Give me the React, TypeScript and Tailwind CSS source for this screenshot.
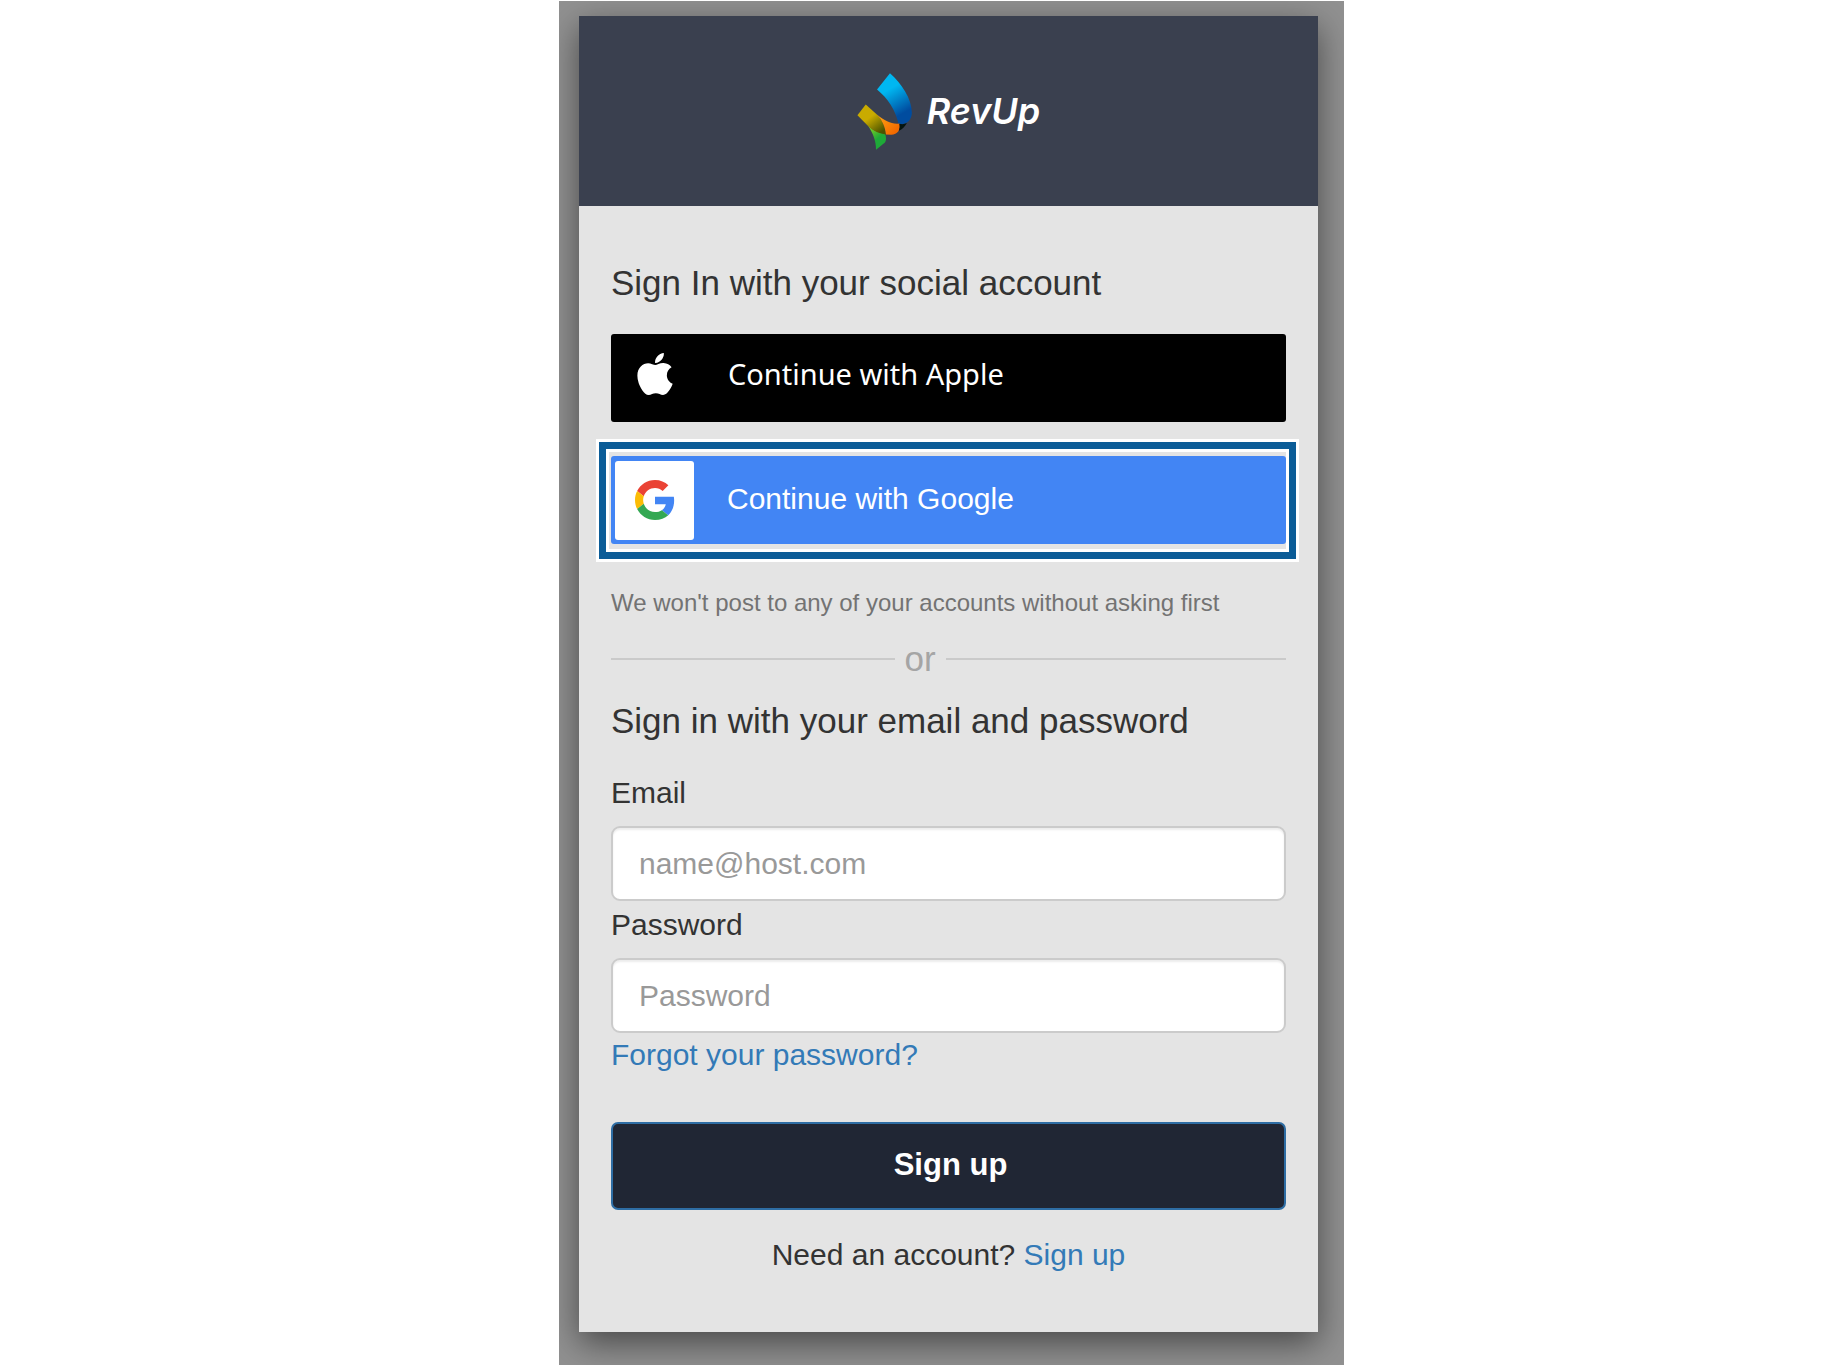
import { FormEvent, useState } from 'react';
import { FaApple } from 'react-icons/fa';

function LogoMark() {
  return (
    <svg viewBox="50 36 168 232" className="w-[56px] h-[77px]" aria-hidden="true">
      <defs>
        <linearGradient id="blue" x1="135" y1="70" x2="200" y2="180" gradientUnits="userSpaceOnUse">
          <stop offset="0.15" stopColor="#00b7f1" />
          <stop offset="0.8" stopColor="#004c9f" />
        </linearGradient>
        <linearGradient id="gold" x1="85" y1="160" x2="125" y2="212" gradientUnits="userSpaceOnUse">
          <stop offset="0.15" stopColor="#c9ab00" />
          <stop offset="1" stopColor="#4b5400" />
        </linearGradient>
        <linearGradient id="orange" x1="118" y1="170" x2="165" y2="212" gradientUnits="userSpaceOnUse">
          <stop offset="0" stopColor="#fb9d10" />
          <stop offset="1" stopColor="#f36a00" />
        </linearGradient>
        <linearGradient id="green" x1="86" y1="198" x2="122" y2="240" gradientUnits="userSpaceOnUse">
          <stop offset="0" stopColor="#8bd022" />
          <stop offset="0.8" stopColor="#1eaa38" />
        </linearGradient>
      </defs>
      <path d="M149 37L110 86C142 112 166 148 175 190C201 193 214 178 215 156C214 112 184 68 149 37Z" fill="url(#blue)" />
      <path d="M83 195C99 210 115 216 134 219C139 232 138 243 131 248L107 267C107 240 98 218 83 195Z" fill="url(#green)" />
      <path d="M76 131L51 163L83 196C100 212 117 219 137 221C133 195 125 178 112 163Z" fill="url(#gold)" />
      <path d="M110 162C135 182 155 191 178 188C182 206 171 222 153 222L137 221C134 198 126 179 110 162Z" fill="url(#orange)" />
      <path d="M177 189C186 191 194 190 200 187C194 198 186 207 176 210Q180 199 177 189Z" fill="#04140f" />
    </svg>
  );
}

function GoogleMark() {
  return (
    <svg viewBox="0 0 48 48" className="size-10" aria-hidden="true">
      <path fill="#EA4335" d="M24 9.5c3.54 0 6.71 1.22 9.21 3.6l6.85-6.85C35.9 2.38 30.47 0 24 0 14.62 0 6.51 5.38 2.56 13.22l7.98 6.19C12.43 13.72 17.74 9.5 24 9.5z" />
      <path fill="#4285F4" d="M46.98 24.55c0-1.57-.15-3.09-.38-4.55H24v9.02h12.94c-.58 2.96-2.26 5.48-4.78 7.18l7.73 6c4.51-4.18 7.09-10.36 7.09-17.65z" />
      <path fill="#FBBC05" d="M10.53 28.59c-.48-1.45-.76-2.99-.76-4.59s.27-3.14.76-4.59l-7.98-6.19C.92 16.46 0 20.12 0 24c0 3.88.92 7.54 2.56 10.78l7.97-6.19z" />
      <path fill="#34A853" d="M24 48c6.48 0 11.93-2.13 15.89-5.81l-7.73-6c-2.15 1.45-4.92 2.3-8.16 2.3-6.26 0-11.57-4.22-13.47-9.91l-7.98 6.19C6.51 42.62 14.62 48 24 48z" />
    </svg>
  );
}

interface FieldProps {
  id: string;
  label: string;
  type: string;
  placeholder: string;
  value: string;
  onChange: (value: string) => void;
}

function Field({ id, label, type, placeholder, value, onChange }: FieldProps) {
  return (
    <div className="flex flex-col gap-3">
      <label htmlFor={id} className="leading-[42px]">
        {label}
      </label>
      <input
        id={id}
        type={type}
        placeholder={placeholder}
        value={value}
        onChange={(e) => onChange(e.target.value)}
        className="w-full h-[75px] px-[26px] rounded-[9px] border-2 border-[#cbcbcb] bg-white text-[#555555] placeholder:text-[#999999] shadow-[inset_0_2px_2px_rgba(0,0,0,0.075)] focus:outline-none focus:border-[#66afe9]"
      />
    </div>
  );
}

export default function App() {
  const [email, setEmail] = useState('');
  const [password, setPassword] = useState('');

  const handleSubmit = (e: FormEvent) => {
    e.preventDefault();
  };

  return (
    <div className="min-h-screen flex justify-center items-start bg-white pt-px pl-[68px] font-['Liberation_Sans',Arial,sans-serif] text-[30px] text-[#333333]">
      <main className="w-full max-w-[785px] bg-[#919191] pt-[15px] pl-5 pr-[26px] pb-[33px] overflow-hidden">
        <div className="bg-[#e4e4e4] shadow-[0_11px_32px_rgba(0,0,0,0.5)]">
          <header className="h-[190px] flex items-center justify-center gap-[14px] bg-[#3a404f]">
            <LogoMark />
            <span className="font-['Inter',sans-serif] font-semibold italic text-4xl text-white">RevUp</span>
          </header>

          <div className="px-8 pt-[57px] pb-14">
            <h1 className="text-[35px] leading-10">Sign In with your social account</h1>

            <button
              type="button"
              className="mt-[31px] w-full h-[88px] flex items-center rounded-[3px] bg-black text-white pl-5 pb-2 text-left"
            >
              <FaApple size={48} />
              <span className="ml-[49px] font-['Noto_Sans',sans-serif] text-[29px]">Continue with Apple</span>
            </button>

            {/* double outline around the highlighted provider */}
            <div className="mt-[17px] -ml-[15px] -mr-[13px] bg-white p-[3px]">
              <div className="border-[7px] border-[#0b5c97] bg-white p-[3px]">
                <div className="bg-[#e4e4e4] pt-1 pb-[5px] pl-[2px]">
                  <button
                    type="button"
                    className="w-full h-[88px] flex items-center rounded-[3px] bg-[#4285f4] text-white p-1 text-left"
                  >
                    <span className="size-[79px] flex items-center justify-center rounded-[3px] bg-white">
                      <GoogleMark />
                    </span>
                    <span className="ml-[33px] pb-1">Continue with Google</span>
                  </button>
                </div>
              </div>
            </div>

            <p className="mt-6 text-2xl leading-[34px] text-[#737373]">
              We won't post to any of your accounts without asking first
            </p>

            <div className="mt-[19px] flex items-center">
              <div className="w-[42%] h-[2px] bg-[#cacaca]" />
              <span className="w-[51px] text-center text-[35px] leading-10 text-[#a5a5a5]">or</span>
              <div className="flex-1 h-[2px] bg-[#cacaca]" />
            </div>

            <form onSubmit={handleSubmit}>
              <h2 className="mt-[22px] mb-[31px] text-[35px] leading-10">Sign in with your email and password</h2>

              <div className="flex flex-col gap-[3px]">
                <Field
                  id="email"
                  label="Email"
                  type="email"
                  placeholder="name@host.com"
                  value={email}
                  onChange={setEmail}
                />
                <Field
                  id="password"
                  label="Password"
                  type="password"
                  placeholder="Password"
                  value={password}
                  onChange={setPassword}
                />
              </div>
              <a href="#forgot" className="mt-px block w-fit leading-[42px] text-[#337ab7] hover:underline">
                Forgot your password?
              </a>

              <button
                type="submit"
                className="mt-[46px] w-full h-[88px] rounded-[7px] border-2 border-[#2e6da4] bg-[#202634] text-white text-[31px] font-bold pl-1 pb-[2px]"
              >
                Sign up
              </button>
            </form>

            <p className="mt-6 text-center leading-[42px]">
              Need an account?{' '}
              <a href="#signup" className="text-[#337ab7] hover:underline">
                Sign up
              </a>
            </p>
          </div>
        </div>
      </main>
    </div>
  );
}
